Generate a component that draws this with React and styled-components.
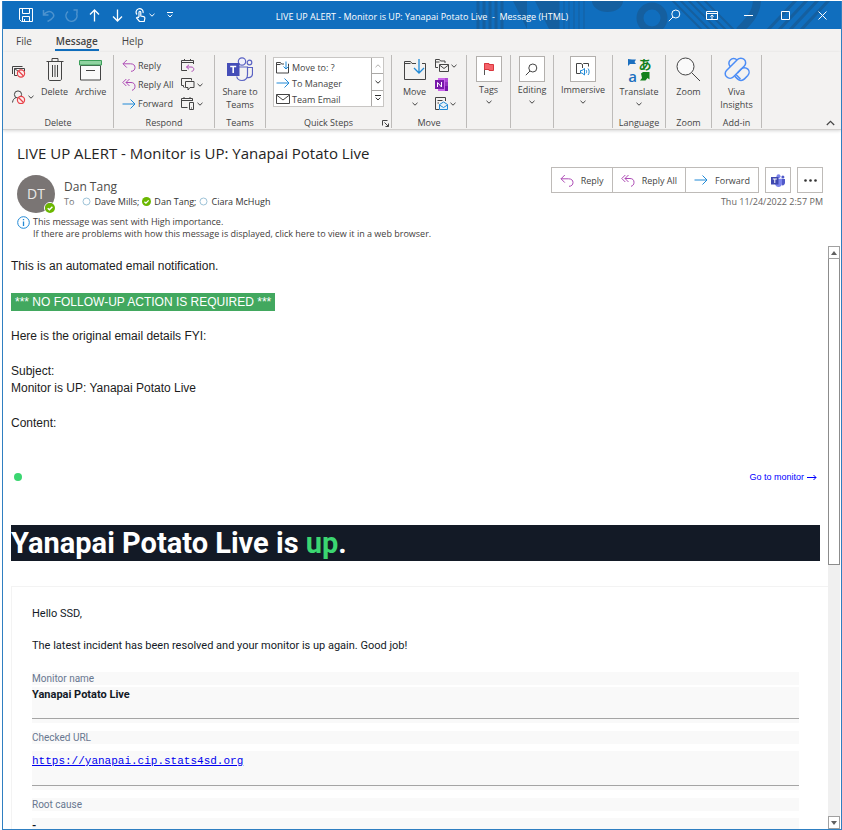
import React from "react";
import styled, { createGlobalStyle, css } from "styled-components";

const UI = `"Open Sans", "Noto Sans", sans-serif`;
const PLAIN = `"Liberation Sans", Arial, sans-serif`;
const BRAND = "#106ebe";
const INK = "#444444";

const Global = createGlobalStyle`
  *, *::before, *::after { box-sizing: border-box; }
  body { margin: 0; background: #ffffff; font-family: ${UI}; color: ${INK}; }
  button { font: inherit; color: inherit; background: none; border: 0; padding: 0; margin: 0; }
  p, h1, h2, dl, dd, dt { margin: 0; }
  svg { display: block; flex: none; }
`;

const Window = styled.div`
  height: 100vh;
  padding: 1px 0 0 2px;
`;
const Frame = styled.div`
  height: 100%;
  display: flex;
  flex-direction: column;
  border: 1px solid #2f7fc1;
  border-top: 0;
  overflow: hidden;
`;

/* Title bar */
const TitleBar = styled.header`
  position: relative;
  flex: none;
  display: grid;
  grid-template-columns: 1fr auto 1fr;
  align-items: center;
  height: 28px;
  background: ${BRAND};
  color: #ffffff;
`;
const Pattern = styled.svg`
  position: absolute;
  top: 0;
  right: 0;
`;
const QuickAccess = styled.div`
  position: relative;
  display: flex;
  align-items: center;
  padding-left: 11px;
`;
const QuickButton = styled.button`
  display: flex;
  align-items: center;
  justify-content: center;
  width: ${(p) => (p.$narrow ? "12px" : "23px")};
  height: 28px;
  opacity: ${(p) => (p.$dim ? 0.25 : 1)};
  margin: ${(p) => (p.$narrow ? "0 0 0 -6px" : "0")};
`;
const WindowTitle = styled.h1`
  position: relative;
  font-size: 9px;
  line-height: 14px;
  font-weight: 400;
  padding-top: 3px;
  white-space: pre;
`;
const Controls = styled.div`
  position: relative;
  display: flex;
  justify-content: flex-end;
  padding-left: 50px;
`;
const ControlButton = styled.button`
  width: 37px;
  height: 28px;
  display: flex;
  align-items: center;
  justify-content: center;
`;

/* Ribbon */
const Tabs = styled.nav`
  flex: none;
  display: flex;
  gap: 22px;
  height: 23px;
  padding: 5px 12px 0;
  background: #f3f2f1;
`;
const Tab = styled.button`
  display: flex;
  flex-direction: column;
  font-size: 10px;
  line-height: 14px;
  height: 17px;
  padding: 0 1px;
  ${(p) =>
    p.$active &&
    css`
      font-weight: 600;
      border-bottom: 2px solid ${BRAND};
    `}
`;
const Ribbon = styled.div`
  flex: none;
  display: flex;
  padding: 3px 0 1px;
  background: #f3f2f1;
  border-bottom: 1px solid #d2d0ce;
  box-shadow: 0 1px 3px rgba(0, 0, 0, 0.16);
  font-size: 9px;
  line-height: 13px;
`;
const Group = styled.section`
  flex: none;
  width: ${(p) => p.$width}px;
  height: 73px;
  display: flex;
  flex-direction: column;
  border-right: 1px solid #bdbbb9;
`;
const GroupBody = styled.div`
  flex: 1;
  display: flex;
  justify-content: ${(p) => p.$justify || "center"};
  align-items: flex-start;
  gap: ${(p) => p.$gap || 0}px;
  padding: ${(p) => p.$pad || "1px 0 0"};
`;
const GroupLabel = styled.div`
  position: relative;
  text-align: center;
  font-size: 9px;
  line-height: 10px;
`;
const Launcher = styled.button`
  position: absolute;
  right: 2px;
  top: 2px;
`;
const Stack = styled.div`
  display: flex;
  flex-direction: column;
  padding-top: ${(p) => p.$top || 0}px;
`;
const SmallButton = styled.button`
  display: flex;
  align-items: center;
  gap: 2px;
  height: ${(p) => p.$height || 19}px;
  white-space: nowrap;
`;
const LargeButton = styled.button`
  display: flex;
  flex-direction: column;
  align-items: center;
  white-space: nowrap;
`;
const LargeIcon = styled.span`
  display: flex;
  align-items: center;
  justify-content: center;
  width: 26px;
  height: 27px;
  margin-bottom: 2px;
  ${(p) =>
    p.$boxed &&
    css`
      height: 26px;
      margin-bottom: 1px;
      background: #ffffff;
      border: 1px solid #b3b0ad;
    `}
`;
const ChevronSlot = styled.span`
  display: flex;
  align-items: center;
  height: 11px;
`;
const StepsBox = styled.div`
  display: flex;
  width: 111px;
  height: 50px;
  background: #ffffff;
  border: 1px solid #c8c6c4;
`;
const StepsList = styled.div`
  flex: 1;
  padding: 1px 0 0 2px;
`;
const StepsScroll = styled.div`
  display: flex;
  flex-direction: column;
  width: 12px;
  border-left: 1px solid #aaa8a6;
`;
const StepsScrollButton = styled.button`
  flex: 1;
  display: flex;
  align-items: center;
  justify-content: center;
  color: ${(p) => (p.disabled ? "#b0aeac" : "#333333")};
  & + & { border-top: 1px solid #aaa8a6; }
`;
const Collapse = styled.button`
  align-self: flex-end;
  margin: 0 6px 0 auto;
  height: 10px;
`;

/* Message header */
const MessageHeader = styled.div`
  flex: none;
  padding: 13px 18px 6px 14px;
`;
const Subject = styled.h2`
  font-size: 15px;
  line-height: 20px;
  font-weight: 400;
  color: #252423;
`;
const SenderRow = styled.div`
  display: flex;
  justify-content: space-between;
  padding-top: 4px;
`;
const Sender = styled.div`
  display: flex;
  gap: 9px;
  padding-top: 8px;
`;
const Avatar = styled.div`
  position: relative;
  width: 38px;
  height: 38px;
  border-radius: 50%;
  background: #7a7574;
  color: #ebe9e8;
  font-size: 14px;
  line-height: 38px;
  text-align: center;
`;
const Presence = styled.span`
  position: absolute;
  right: -1px;
  bottom: -1px;
  border-radius: 50%;
  border: 1px solid #ffffff;
`;
const SenderName = styled.div`
  padding-top: 4px;
  font-size: 12px;
  line-height: 16px;
  color: #4c4a48;
`;
const Recipients = styled.div`
  display: flex;
  align-items: center;
  gap: 3px;
  font-size: 9px;
  line-height: 13px;
  color: #333333;
`;
const ToLabel = styled.span`
  color: #767472;
  margin-right: 5px;
`;
const Actions = styled.div`
  display: flex;
  flex-direction: column;
  align-items: flex-end;
`;
const ActionBar = styled.div`
  display: flex;
  gap: 6px;
`;
const ActionGroup = styled.div`
  display: flex;
`;
const ActionButton = styled.button`
  display: flex;
  align-items: center;
  justify-content: center;
  gap: 7px;
  height: 26px;
  min-width: 26px;
  padding: ${(p) => (p.$icon ? "0" : "0 8px")};
  background: #ffffff;
  border: 1px solid #bebbb8;
  font-size: 9px;
  white-space: nowrap;
  ${ActionGroup} & + & { border-left: 0; }
`;
const Sent = styled.time`
  padding-top: 2px;
  font-size: 9px;
  line-height: 13px;
  color: #666462;
`;
const InfoBar = styled.div`
  display: flex;
  gap: 3px;
  padding-top: 3px;
  font-size: 9px;
  line-height: 12px;
  color: #3f3d3b;
`;

/* Reading pane */
const Pane = styled.div`
  flex: 1;
  min-height: 0;
  display: flex;
`;
const Mail = styled.main`
  flex: 1;
  min-width: 0;
  overflow: hidden;
  padding: 12px 0 0 8px;
  font-family: ${PLAIN};
  font-size: 12px;
  line-height: 17px;
  color: #1c1c1c;
`;
const Para = styled.p`
  margin-bottom: 18px;
`;
const Notice = styled.span`
  display: inline-block;
  vertical-align: top;
  height: 18px;
  line-height: 18px;
  padding: 0 4px;
  margin-bottom: -1px;
  background: #42a85f;
  color: #ffffff;
`;
const StatusRow = styled.div`
  display: flex;
  align-items: center;
  justify-content: space-between;
  height: 20px;
  margin-top: 35px;
  padding: 0 11px 0 3px;
`;
const Dot = styled.span`
  width: 8px;
  height: 8px;
  border-radius: 50%;
  background: #3bd671;
`;
const MonitorLink = styled.a`
  display: flex;
  align-items: center;
  gap: 3px;
  font-size: 9px;
  color: #0000ff;
  text-decoration: none;
`;
const Banner = styled.h2`
  margin: 38px 8px 25px 0;
  height: 36px;
  line-height: 36px;
  font-family: Roboto, sans-serif;
  font-size: 29px;
  font-weight: 700;
  background: #131a26;
  color: #ffffff;
`;
const Up = styled.span`
  color: #3bd671;
`;
const Card = styled.div`
  border: 1px solid #f3f3f3;
  border-right: 0;
  padding: 19px 29px 0 20px;
  font-family: Roboto, sans-serif;
  font-size: 11px;
  line-height: 16px;
  color: #131a26;
`;
const CardText = styled.p`
  margin-bottom: 16px;
`;
const Fields = styled.dl`
  padding-top: 2px;
`;
const FieldName = styled.dt`
  background: #f9f9f9;
  font-size: 10px;
  line-height: 13px;
  color: #687790;
`;
const FieldValue = styled.dd`
  margin-top: ${(p) => (p.$loose ? 7 : 2)}px;
  margin-bottom: 8px;
  padding-bottom: 4px;
  background: #f9f9f9;
  font-weight: 700;
  &::after {
    content: "";
    display: block;
    margin-top: 15px;
    border-top: 1px solid #a5a5a5;
  }
`;
const UrlLink = styled.a`
  display: block;
  padding: 2px 0 1px;
  font-family: "Liberation Mono", monospace;
  font-size: 11px;
  font-weight: 400;
  color: #0000ee;
`;

const ScrollBar = styled.div`
  flex: none;
  display: flex;
  flex-direction: column;
  width: 12px;
  margin-right: 1px;
  background: #f0f0f0;
`;
const ScrollButton = styled.button`
  flex: none;
  display: flex;
  align-items: center;
  justify-content: center;
  height: 13px;
  background: #ffffff;
  border: 1px solid #a0a0a0;
`;
const ScrollTrack = styled.div`
  flex: 1;
`;
const Thumb = styled.div`
  height: 55%;
  background: #ffffff;
  border: 1px solid #8c8c8c;
  border-top: 0;
`;

/* Icons */
const Icon = ({ w = 14, h = w, box = `0 0 ${w} ${h}`, children, ...rest }) => (
  <svg width={w} height={h} viewBox={box} fill="none" stroke="currentColor" strokeWidth="1" aria-hidden="true" {...rest}>
    {children}
  </svg>
);
const Chevron = ({ up }) => (
  <Icon w={6} h={4}>
    <path d={up ? "M.5 3.2 3 .8 5.5 3.2" : "M.5 .8 3 3.2 5.5 .8"} />
  </Icon>
);
const ReplyIcon = () => (
  <Icon w={14} h={13} stroke="#ad4bb5">
    <path d="M4.8 1 1 4.8l3.8 3.8M1 4.8h7.6c2.8 0 4.4 1.5 4.4 3.700S11.500 12.300 9 12.300" />
  </Icon>
);
const ReplyAllIcon = () => (
  <Icon w={14} h={13} stroke="#ad4bb5">
    <path d="M4.300 1 .8 4.500l3.500 3.500M7.500 1 4 4.500 7.500 8M4 4.500h5c2.600 0 4 1.500 4 3.800 0 2.200-1.200 3.600-3 4" />
  </Icon>
);
const ForwardIcon = () => (
  <Icon w={14} h={12} stroke="#2089d6">
    <path d="M.5 6h12.500M8.500 1.500 13 6l-4.500 4.500" />
  </Icon>
);
const BlockSign = ({ x, y }) => (
  <g stroke="#e8434a" strokeWidth="1.200">
    <circle cx={x} cy={y} r="3.600" fill="#fbeeee" />
    <path d={`M${x - 2.500} ${y - 2.500}l5 5`} />
  </g>
);
const IgnoreIcon = () => (
  <Icon w={14} h={13}>
    <path d="M.5 9V1.500h10M2.500 10.500v-7h10v3M2.500 3.500l4 3M2.500 10.500h3" />
    <BlockSign x={9} y={8.500} />
  </Icon>
);
const JunkIcon = () => (
  <Icon w={14} h={14}>
    <circle cx="6" cy="4.500" r="3.600" />
    <path d="M.5 12.500c.3-2.600 1.600-4.300 3.500-4.900" />
    <BlockSign x={9} y={10} />
  </Icon>
);
const TrashIcon = () => (
  <Icon w={18} h={25}>
    <path d="M.5 4.500h17M6 4V1.500h6V4M2.500 4.500v17.500c0 .8.6 1.500 1.500 1.500h10c.9 0 1.500-.7 1.500-1.500V4.500M6.500 8v12M9 8v12M11.500 8v12" />
  </Icon>
);
const ArchiveIcon = () => (
  <Icon w={23} h={22}>
    <path d="M1.500 6.500h20v14.500h-20z" fill="#fafafa" />
    <path d="M.5 1.500h22v4.500H.5z" fill="#8fd3a0" stroke="#3c9f5a" />
    <path d="M7 11.500h9" />
  </Icon>
);
const MeetingIcon = () => (
  <Icon w={14} h={13}>
    <path d="M6 11.500H.5v-10h12V5M.5 3.500h12M3.500 0v2M9.500 0v2" />
    <path d="M8 5.800 5.500 8 8 10.300M5.500 8H10c2 0 2.800 1 2.800 2.200S12 12.300 10.500 12.300" stroke="#ad4bb5" />
  </Icon>
);
const ImReplyIcon = () => (
  <Icon w={14} h={13}>
    <path d="M3.500 9.500 2.500 9v-1.500h-2v-7h10v2M4.500 3.500h8.500v6H9l-2 2.500V9.500H4.500z" />
  </Icon>
);
const MoreRespondIcon = () => (
  <Icon w={14} h={13}>
    <path d="M6.500 10.500h-6v-9h11V4M.5 3.500h11M3 0v2M9 0v2M8.500 5.500h4v7h-4zM10 11h1" />
  </Icon>
);
const TeamsIcon = ({ w = 26, h = 25 }) => (
  <Icon w={w} h={h} box="0 0 26 25" stroke="#5a62c3" strokeWidth="1.200">
    <circle cx="15" cy="4.500" r="3.700" fill="#f0f0fb" />
    <circle cx="22.500" cy="5.500" r="2.300" />
    <path d="M11 10h9.500v7.500c0 4-2.500 6-5.500 6-2.600 0-4.800-1.600-5.300-4M20.500 10.500h5v6c0 2.800-2 4.700-5.300 4" />
    <path d="M0 6h12.500v13H0z" fill="#454eb8" stroke="none" />
    <path d="M3.200 9.500h6M6.200 9.500v6.500" stroke="#ffffff" strokeWidth="1.600" />
  </Icon>
);
const TeamsSolidIcon = () => (
  <Icon w={14} h={13} stroke="none">
    <circle cx="7.500" cy="2.200" r="2" fill="#7b83eb" />
    <circle cx="11.900" cy="2.900" r="1.500" fill="#5059c9" />
    <path d="M10 5h4v3.800c0 1.800-1.400 2.900-3.200 2.500z" fill="#5059c9" />
    <path d="M4 4.800h7V9c0 2.500-1.500 4-3.500 4S4 11.500 4 9z" fill="#7b83eb" />
    <path d="M0 3h7.500v7.500H0z" fill="#3f48b0" />
    <path d="M1.800 5h4M3.800 5v4" stroke="#ffffff" />
  </Icon>
);
const FolderDownIcon = () => (
  <Icon w={14} h={13}>
    <path d="M8 3H5.500L4.500 1.500h-4v10.500h12V3H12M.5 3.500h4" />
    <path d="M10 .5v7M7.500 5.500 10 8l2.500-2.500" stroke="#2089d6" />
  </Icon>
);
const MoveLargeIcon = () => (
  <Icon w={24} h={22}>
    <path d="M13 4.500H9L7.500 2.500h-6v18h21v-16H19M1.500 4.500h6" />
    <path d="M16 0v14M11 9l5 5 5-5" stroke="#2089d6" strokeWidth="1.300" />
  </Icon>
);
const MailIcon = () => (
  <Icon w={14} h={10}>
    <path d="M.5.5h13v9H.5zM.5 1 7 6l6.500-5" />
  </Icon>
);
const RulesIcon = () => (
  <Icon w={14} h={13}>
    <path d="M3 8.500H.5v-8h4L5.500 2h4.500v2M4.500 5.500h9v7h-9zM4.500 6 9 9.500 13.500 6M.5 3h4" />
  </Icon>
);
const OneNoteIcon = () => (
  <Icon w={13} h={13} stroke="none">
    <path d="M3 0h10v13H3z" fill="#ca64ea" />
    <path d="M10 0h3v4h-3z" fill="#ae4bd5" />
    <path d="M10 4h3v4h-3z" fill="#9332bf" />
    <path d="M10 8h3v5h-3z" fill="#7719aa" />
    <path d="M0 2h9v9H0z" fill="#7719aa" />
    <path d="M2.500 9V4.500l4 4.500V4" stroke="#ffffff" />
  </Icon>
);
const ActionsIcon = () => (
  <Icon w={13} h={13}>
    <path d="M4 12.500H.5V.5h10V4M2.500 3.500h5M2.500 6h1.500" />
    <path d="M4.500 7.500 8.500 5l4 2.500v5h-8zM4.500 8l4 2.500L12.500 8" stroke="#2089d6" fill="#e5f2fb" />
  </Icon>
);
const FlagIcon = () => (
  <Icon w={12} h={14} stroke="#d9363e">
    <path d="M1.500 13V1.500" stroke="#555555" />
    <path d="M1.500 1.500h4.500v1h4.500v6H6v-1H1.500z" fill="#f4636a" />
  </Icon>
);
const SearchIcon = ({ w = 13 }) => (
  <Icon w={w} box="0 0 13 13">
    <circle cx="7.800" cy="5" r="4" />
    <path d="M5 8 .8 12.200" />
  </Icon>
);
const ImmersiveIcon = () => (
  <Icon w={14} h={14}>
    <path d="M4.500 11.500h-4v-10h4.500l1.500 1V6M6.500 2.500l1-1h5v3" />
    <path d="M4.500 8.500h1.500l2.500-2v6.500l-2.500-2H4.500zM10 8c.8.8.8 2.500 0 3.300M12 6.500c1.500 1.500 1.500 5 0 6.500" stroke="#2089d6" />
  </Icon>
);
const TranslateMark = styled.span`
  display: grid;
  grid-template-columns: 12px 13px;
  grid-template-rows: 13px 12px;
  align-items: center;
  justify-items: center;
  line-height: 13px;
`;
const Latin = styled.span`
  font-size: 15px;
  font-weight: 600;
  line-height: 12px;
  color: #1b6fbf;
`;
const Kana = styled.span`
  font-family: "Noto Sans CJK JP", sans-serif;
  font-size: 13px;
  font-weight: 700;
  color: #13811d;
`;
const TranslateIcon = () => (
  <TranslateMark aria-hidden="true">
    <Icon w={10} h={9} stroke="none"><path d="M1 0v7l2-2h6L7.500 3 9 0.500H5z" fill="#1b6fbf" /></Icon>
    <Kana>あ</Kana>
    <Latin>a</Latin>
    <Icon w={10} h={9} stroke="none"><path d="M1 1.500 3 0h6.500v7.500L7.500 6 5.500 8.500H0l2-2.500z" fill="#13811d" /></Icon>
  </TranslateMark>
);
const ZoomIcon = () => (
  <Icon w={25} h={25}>
    <circle cx="9.500" cy="9.500" r="8.500" fill="#fafafa" />
    <path d="m15.700 15.700 8.300 8.300" />
  </Icon>
);
const VivaIcon = () => (
  <Icon w={26} h={25} stroke="#4c8df6" strokeWidth="1.500">
    <path d="M2.500 13.500 13.500 2.500C15 .8 18.500.6 20.300 2.500c1.900 1.900 1.700 4.900 0 6.500L9.500 19.800c-1.900 1.800-5 1.800-6.900 0-1.800-1.700-1.900-4.500-.1-6.300z" />
    <path d="M13 3c-1.900-1.900-4.900-1.900-6.700 0-1.900 1.900-1.900 4.800 0 6.600" />
    <path d="M13.500 16 17 12.200c1.800-1.900 4.900-1.900 6.800-.1 1.700 1.800 1.700 4.700 0 6.500l-3.300 3.300c-2 2-5 2-7 0l-2.800-2.800" />
    <path d="M12 17.500 16.500 22" />
  </Icon>
);
const CheckDot = ({ size }) => (
  <Icon w={size} box="0 0 10 10" stroke="#ffffff" strokeWidth="1.400">
    <circle cx="5" cy="5" r="5" fill="#6bb700" stroke="none" />
    <path d="M2.700 5.200 4.400 6.800 7.400 3.800" />
  </Icon>
);
const EmptyDot = () => (
  <Icon w={9} stroke="#9ec3d8">
    <circle cx="4.500" cy="4.500" r="3.500" />
  </Icon>
);
const InfoIcon = () => (
  <Icon w={13} stroke="#2089d6">
    <circle cx="6.500" cy="6.500" r="5.800" />
    <path d="M6.500 5.500v4.500M6.500 3v1.300" strokeWidth="1.300" />
  </Icon>
);
const Triangle = ({ up }) => (
  <Icon w={6} h={4} stroke="none">
    <path d={up ? "M0 4 3 0l3 4z" : "M0 0l3 4 3-4z"} fill="#606060" />
  </Icon>
);
const MoreChevron = () => (
  <Icon w={6} h={6}>
    <path d="M0 .5h6M.8 2.700 3 5 5.200 2.700" />
  </Icon>
);

const series = (from, count, step) => Array.from({ length: count }, (_, i) => from + i * step);

const TitlePattern = () => (
  <Pattern width="366" height="28" viewBox="0 0 366 28" aria-hidden="true">
    <g fill="none" stroke="#155f9f">
      {series(3, 5, 6).map((x) => <path key={x} d={`M${x} 0v28`} strokeWidth="3" />)}
      {series(79, 7, 5).map((x) => <path key={x} d={`M${x} 0v28`} strokeWidth="1" />)}
      <circle cx="177" cy="17" r="12" strokeWidth="7" />
      {series(210, 5, 8).map((x) => <path key={x} d={`M${x - 14} -2l32 32`} strokeWidth="2" />)}
      <path d="M282 -2c0 14-8 22-18 32" strokeWidth="8" />
      {series(300, 4, 11).map((x) => <path key={x} d={`M${x + 22} -2l-30 32`} strokeWidth="3" />)}
    </g>
    <g fill="#155f9f">
      <path d="M38 0h14v28zM60 0h24v28h-10z" />
      <path d="M117 0h31a15.500 11 0 0 1-31 0z" />
    </g>
  </Pattern>
);

const Large = ({ icon, boxed, lines, menu }) => (
  <LargeButton>
    <LargeIcon $boxed={boxed}>{icon}</LargeIcon>
    {lines.map((line) => <span key={line}>{line}</span>)}
    {menu && <ChevronSlot><Chevron /></ChevronSlot>}
  </LargeButton>
);

export default function App() {
  return (
    <Window>
      <Global />
      <Frame>
        <TitleBar>
          <TitlePattern />
          <QuickAccess>
            <QuickButton aria-label="Save">
              <Icon w={14}><path d="M.5.500h13v13H2.500l-2-2zM3.500.500v5h7v-5M3.500 13.500V8.500h7v5M5.500 11v2" /></Icon>
            </QuickButton>
            <QuickButton aria-label="Undo" $dim>
              <Icon w={13} strokeWidth="1.500"><path d="M1.500 1v5h5M1.500 6C4 2.500 8 1.500 10.500 4s1.500 5-5 8.500" /></Icon>
            </QuickButton>
            <QuickButton aria-label="Redo" $dim>
              <Icon w={13} strokeWidth="1.500"><path d="M8.500 1h3.500v3.500M11.500 4.500A5.500 5.500 0 1 1 3 2.500" /></Icon>
            </QuickButton>
            <QuickButton aria-label="Previous item">
              <Icon w={11} h={13} strokeWidth="1.300"><path d="M5.500 12.500V1M1 5.500 5.500 1 10 5.500" /></Icon>
            </QuickButton>
            <QuickButton aria-label="Next item">
              <Icon w={11} h={13} strokeWidth="1.300"><path d="M5.500.500V12M1 7.500 5.500 12 10 7.500" /></Icon>
            </QuickButton>
            <QuickButton aria-label="Touch or mouse mode">
              <Icon w={11} h={14} strokeWidth="1.200">
                <path d="M2 6.500A3.500 3.500 0 1 1 8 5M4 9V4.300c0-1.400 1.800-1.400 1.800 0V8l3 .6c1 .3 1.200.9 1 1.900l-.6 3H4.500L1.500 10c.4-1 1.500-1 2.500-.2" />
              </Icon>
            </QuickButton>
            <QuickButton aria-label="Mode options" $narrow><Chevron /></QuickButton>
            <QuickButton aria-label="Customize toolbar"><MoreChevron /></QuickButton>
          </QuickAccess>
          <WindowTitle>{"LIVE UP ALERT - Monitor is UP: Yanapai Potato Live  -  Message (HTML)"}</WindowTitle>
          <Controls>
            <ControlButton aria-label="Search"><SearchIcon w={13} /></ControlButton>
            <ControlButton aria-label="Ribbon display options">
              <Icon w={12} h={9}><path d="M.5.500h11v8H.5zM.5 2.500h11M6 8V4M4.300 5.500 6 4l1.700 1.500" /></Icon>
            </ControlButton>
            <ControlButton aria-label="Minimize"><Icon w={9}><path d="M0 4.500h9" /></Icon></ControlButton>
            <ControlButton aria-label="Maximize"><Icon w={9}><path d="M.5.500h8v8h-8z" /></Icon></ControlButton>
            <ControlButton aria-label="Close"><Icon w={9}><path d="m.5.500 8 8M8.500.500l-8 8" /></Icon></ControlButton>
          </Controls>
        </TitleBar>

        <Tabs>
          <Tab>File</Tab>
          <Tab $active aria-current="page">Message</Tab>
          <Tab>Help</Tab>
        </Tabs>

        <Ribbon>
          <Group $width={111}>
            <GroupBody $justify="flex-start" $gap={7} $pad="1px 0 0 9px">
              <Stack $top={3}>
                <SmallButton $height={25} aria-label="Ignore"><IgnoreIcon /></SmallButton>
                <SmallButton $height={25} aria-label="Junk"><JunkIcon /><Chevron /></SmallButton>
              </Stack>
              <Large icon={<TrashIcon />} lines={["Delete"]} />
              <Large icon={<ArchiveIcon />} lines={["Archive"]} />
            </GroupBody>
            <GroupLabel>Delete</GroupLabel>
          </Group>

          <Group $width={101}>
            <GroupBody $justify="flex-start" $gap={8} $pad="1px 0 0 8px">
              <Stack>
                <SmallButton><ReplyIcon />Reply</SmallButton>
                <SmallButton><ReplyAllIcon />Reply All</SmallButton>
                <SmallButton><ForwardIcon />Forward</SmallButton>
              </Stack>
              <Stack>
                <SmallButton aria-label="Meeting"><MeetingIcon /></SmallButton>
                <SmallButton aria-label="Reply with message"><ImReplyIcon /><Chevron /></SmallButton>
                <SmallButton aria-label="More respond actions"><MoreRespondIcon /><Chevron /></SmallButton>
              </Stack>
            </GroupBody>
            <GroupLabel>Respond</GroupLabel>
          </Group>

          <Group $width={51}>
            <GroupBody><Large icon={<TeamsIcon />} lines={["Share to", "Teams"]} /></GroupBody>
            <GroupLabel>Teams</GroupLabel>
          </Group>

          <Group $width={126}>
            <GroupBody $justify="flex-start" $pad="2px 0 0 7px">
              <StepsBox>
                <StepsList>
                  <SmallButton $height={16}><FolderDownIcon />Move to: ?</SmallButton>
                  <SmallButton $height={16}><ForwardIcon />To Manager</SmallButton>
                  <SmallButton $height={16}><MailIcon />Team Email</SmallButton>
                </StepsList>
                <StepsScroll>
                  <StepsScrollButton aria-label="Previous steps" disabled><Chevron up /></StepsScrollButton>
                  <StepsScrollButton aria-label="Next steps"><Chevron /></StepsScrollButton>
                  <StepsScrollButton aria-label="All steps"><MoreChevron /></StepsScrollButton>
                </StepsScroll>
              </StepsBox>
            </GroupBody>
            <GroupLabel>
              Quick Steps
              <Launcher aria-label="Manage quick steps">
                <Icon w={7}><path d="M.5 5.500v-5h5M2.500 2.500l4 4M6.500 3.500v3h-3" /></Icon>
              </Launcher>
            </GroupLabel>
          </Group>

          <Group $width={75}>
            <GroupBody $gap={7}>
              <Large icon={<MoveLargeIcon />} lines={["Move"]} menu />
              <Stack>
                <SmallButton aria-label="Rules"><RulesIcon /><Chevron /></SmallButton>
                <SmallButton aria-label="Send to OneNote"><OneNoteIcon /></SmallButton>
                <SmallButton aria-label="Actions"><ActionsIcon /><Chevron /></SmallButton>
              </Stack>
            </GroupBody>
            <GroupLabel>Move</GroupLabel>
          </Group>

          <Group $width={44}>
            <GroupBody><Large boxed icon={<FlagIcon />} lines={["Tags"]} menu /></GroupBody>
          </Group>
          <Group $width={43}>
            <GroupBody><Large boxed icon={<SearchIcon />} lines={["Editing"]} menu /></GroupBody>
          </Group>
          <Group $width={59}>
            <GroupBody><Large boxed icon={<ImmersiveIcon />} lines={["Immersive"]} menu /></GroupBody>
          </Group>
          <Group $width={53}>
            <GroupBody><Large icon={<TranslateIcon />} lines={["Translate"]} menu /></GroupBody>
            <GroupLabel>Language</GroupLabel>
          </Group>
          <Group $width={46}>
            <GroupBody><Large icon={<ZoomIcon />} lines={["Zoom"]} /></GroupBody>
            <GroupLabel>Zoom</GroupLabel>
          </Group>
          <Group $width={50}>
            <GroupBody><Large icon={<VivaIcon />} lines={["Viva", "Insights"]} /></GroupBody>
            <GroupLabel>Add-in</GroupLabel>
          </Group>
          <Collapse aria-label="Collapse ribbon">
            <Icon w={9} h={6}><path d="M.8 5 4.500 1.300 8.200 5" strokeWidth="1.200" /></Icon>
          </Collapse>
        </Ribbon>

        <MessageHeader>
          <Subject>LIVE UP ALERT - Monitor is UP: Yanapai Potato Live</Subject>
          <SenderRow>
            <Sender>
              <Avatar>
                DT
                <Presence><CheckDot size={10} /></Presence>
              </Avatar>
              <div>
                <SenderName>Dan Tang</SenderName>
                <Recipients>
                  <ToLabel>To</ToLabel>
                  <EmptyDot /><span>Dave Mills;</span>
                  <CheckDot size={9} /><span>Dan Tang;</span>
                  <EmptyDot /><span>Ciara McHugh</span>
                </Recipients>
              </div>
            </Sender>
            <Actions>
              <ActionBar>
                <ActionGroup>
                  <ActionButton><ReplyIcon />Reply</ActionButton>
                  <ActionButton><ReplyAllIcon />Reply All</ActionButton>
                  <ActionButton><ForwardIcon />Forward</ActionButton>
                </ActionGroup>
                <ActionButton $icon aria-label="Share to Teams"><TeamsSolidIcon /></ActionButton>
                <ActionButton $icon aria-label="More actions">
                  <Icon w={13} h={3} stroke="none" fill="#333333">
                    <circle cx="1.500" cy="1.500" r="1.300" /><circle cx="6.500" cy="1.500" r="1.300" /><circle cx="11.500" cy="1.500" r="1.300" />
                  </Icon>
                </ActionButton>
              </ActionBar>
              <Sent dateTime="2022-11-24T14:57">Thu 11/24/2022 2:57 PM</Sent>
            </Actions>
          </SenderRow>
          <InfoBar>
            <InfoIcon />
            <div>
              <p>This message was sent with High importance.</p>
              <p>If there are problems with how this message is displayed, click here to view it in a web browser.</p>
            </div>
          </InfoBar>
        </MessageHeader>

        <Pane>
          <Mail>
            <Para>This is an automated email notification.</Para>
            <Para><Notice>*** NO FOLLOW-UP ACTION IS REQUIRED ***</Notice></Para>
            <Para>Here is the original email details FYI:</Para>
            <Para>Subject:<br />Monitor is UP: Yanapai Potato Live</Para>
            <Para>Content:</Para>
            <StatusRow>
              <Dot />
              <MonitorLink href="#monitor">
                Go to monitor
                <Icon w={10} h={7}><path d="M0 3.500h9M6.500 1 9 3.500 6.500 6" /></Icon>
              </MonitorLink>
            </StatusRow>
            <Banner>Yanapai Potato Live is <Up>up</Up>.</Banner>
            <Card>
              <CardText>Hello SSD,</CardText>
              <CardText>The latest incident has been resolved and your monitor is up again. Good job!</CardText>
              <Fields>
                <FieldName>Monitor name</FieldName>
                <FieldValue>Yanapai Potato Live</FieldValue>
                <FieldName>Checked URL</FieldName>
                <FieldValue $loose><UrlLink href="https://yanapai.cip.stats4sd.org">https://yanapai.cip.stats4sd.org</UrlLink></FieldValue>
                <FieldName>Root cause</FieldName>
                <FieldValue $loose>-</FieldValue>
              </Fields>
            </Card>
          </Mail>
          <ScrollBar>
            <ScrollButton aria-label="Scroll up"><Triangle up /></ScrollButton>
            <ScrollTrack><Thumb /></ScrollTrack>
            <ScrollButton aria-label="Scroll down"><Triangle /></ScrollButton>
          </ScrollBar>
        </Pane>
      </Frame>
    </Window>
  );
}
